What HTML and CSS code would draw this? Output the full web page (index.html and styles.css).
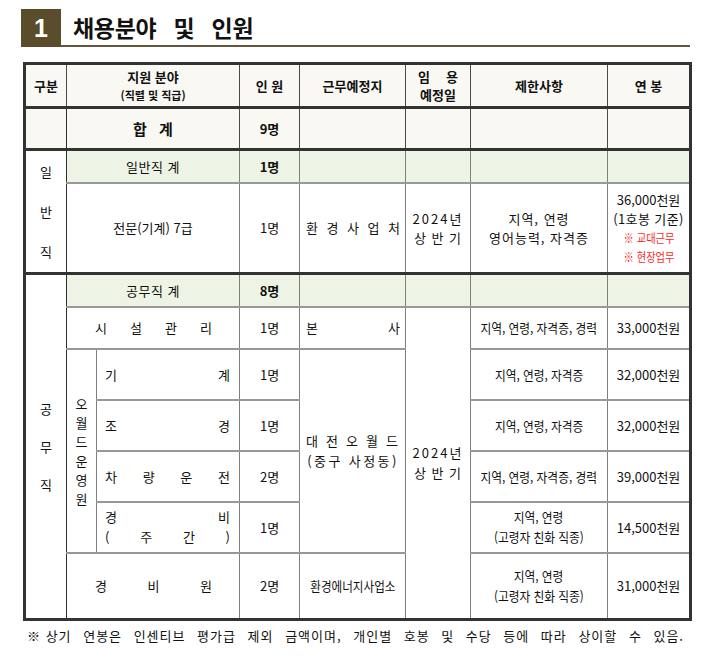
FILE: index.html
```html
<!DOCTYPE html>
<html lang="ko">
<head>
<meta charset="utf-8">
<title>채용분야 및 인원</title>
<link rel="stylesheet" href="styles.css">
</head>
<body>
<div class="page">
  <div class="title-bar">
    <div class="num">1</div>
    <div class="title-text">채용분야 및 인원</div>
  </div>

  <table class="recruit">
    <colgroup>
      <col class="w1"><col class="w2"><col class="w3"><col class="w4">
      <col class="w5"><col class="w6"><col class="w7"><col class="w8">
    </colgroup>
    <tr class="r-head">
      <th class="c1">구분</th>
      <th colspan="2"><div>지원 분야</div><div class="sub">(직렬 및 직급)</div></th>
      <th>인 원</th>
      <th>근무예정지</th>
      <th><div class="jbox"><div class="jl">임 용</div><div>예정일</div></div></th>
      <th>제한사항</th>
      <th>연 봉</th>
    </tr>
    <tr class="r-total">
      <td class="c1"></td>
      <td colspan="2" class="total-label">합 계</td>
      <td class="b">9명</td>
      <td></td><td></td><td></td><td></td>
    </tr>
    <tr class="r-sum">
      <td class="c1 white thick-b" rowspan="2"><div class="vt vt-a"><div>일</div><div>반</div><div>직</div></div></td>
      <td colspan="2" class="g sum-label">일반직 계</td>
      <td class="g b">1명</td>
      <td class="g"></td><td class="g"></td><td class="g"></td><td class="g"></td>
    </tr>
    <tr class="r-jm thick-row">
      <td colspan="2">전문(기계) 7급</td>
      <td>1명</td>
      <td><div class="jl pad-c">환 경 사 업 처</div></td>
      <td><div class="sp2">2024년</div><div class="sp1">상 반 기</div></td>
      <td class="wide"><div>지역, 연령</div><div>영어능력, 자격증</div></td>
      <td><div class="sal">36,000천원</div><div class="sal2">(1호봉 기준)</div><div class="red"><span class="sq">※ 교대근무</span></div><div class="red"><span class="sq">※ 현장업무</span></div></td>
    </tr>
    <tr class="r-sum">
      <td class="c1 white" rowspan="7"><div class="vt vt-b"><div>공</div><div>무</div><div>직</div></div></td>
      <td colspan="2" class="g sum-label">공무직 계</td>
      <td class="g b">8명</td>
      <td class="g"></td><td class="g"></td><td class="g"></td><td class="g"></td>
    </tr>
    <tr class="r-42">
      <td colspan="2"><div class="jl pad-a">시 설 관 리</div></td>
      <td>1명</td>
      <td><div class="jl pad-c">본 사</div></td>
      <td rowspan="6"><div class="lh20"><div class="sp2">2024년</div><div class="sp1">상 반 기</div></div></td>
      <td><span class="sq cond">지역, 연령, 자격증, 경력</span></td>
      <td>33,000천원</td>
    </tr>
    <tr class="r-51">
      <td rowspan="4" class="c2"><div class="vt vt-c"><div>오</div><div>월</div><div>드</div><div>운</div><div>영</div><div>원</div></div></td>
      <td><div class="jl pad-b">기 계</div></td>
      <td>1명</td>
      <td rowspan="4"><div class="lh20 pad-c"><div class="jl sp2">대 전 오 월 드</div><div class="sp25">(중구 사정동)</div></div></td>
      <td><span class="sq cond">지역, 연령, 자격증</span></td>
      <td>32,000천원</td>
    </tr>
    <tr class="r-51">
      <td><div class="jl pad-b">조 경</div></td>
      <td>1명</td>
      <td><span class="sq cond">지역, 연령, 자격증</span></td>
      <td>32,000천원</td>
    </tr>
    <tr class="r-51">
      <td><div class="jl pad-b">차 량 운 전</div></td>
      <td>2명</td>
      <td><span class="sq cond">지역, 연령, 자격증, 경력</span></td>
      <td>39,000천원</td>
    </tr>
    <tr class="r-51">
      <td><div class="lh20"><div class="jl pad-b">경 비</div><div class="jl pad-b">( 주 간 )</div></div></td>
      <td>1명</td>
      <td><div class="lh20"><div><span class="sq cond">지역, 연령</span></div><div><span class="sq cond">(고령자 친화 직종)</span></div></div></td>
      <td>14,500천원</td>
    </tr>
    <tr class="r-last">
      <td colspan="2"><div class="jl pad-a">경 비 원</div></td>
      <td>2명</td>
      <td><span class="sq narrow">환경에너지사업소</span></td>
      <td><div class="lh20"><div><span class="sq cond">지역, 연령</span></div><div><span class="sq cond">(고령자 친화 직종)</span></div></div></td>
      <td>31,000천원</td>
    </tr>
  </table>

  <p class="note"><span class="nb">※ 상기</span> 연봉은 인센티브 평가급 제외 금액이며, 개인별 호봉 및 수당 등에 따라 상이할 수 있음.</p>
</div>
</body>
</html>
```

FILE: styles.css
```css
* { box-sizing: border-box; }

body {
  margin: 0;
  background: #ffffff;
  color: #111111;
  font-family: "Noto Sans CJK KR", "Noto Sans", sans-serif;
}

.page {
  padding-top: 9px;
}

.title-bar {
  display: flex;
  margin-left: 21px;
  width: 669px;
  height: 38px;
}

.num {
  width: 40px;
  height: 38px;
  background: #5a4d2b;
  color: #ffffff;
  font-family: "Liberation Sans", Arial, sans-serif;
  font-weight: 700;
  font-size: 25px;
  display: flex;
  align-items: center;
  justify-content: center;
}

.title-text {
  flex: 1;
  height: 38px;
  border-bottom: 2px solid #62573a;
  padding-left: 12px;
  font-size: 23px;
  font-weight: 700;
  line-height: 36px;
  letter-spacing: -0.3px;
  word-spacing: 11px;
  color: #111111;
}

.recruit {
  margin-top: 15px;
  margin-left: 23px;
  border-collapse: collapse;
  table-layout: fixed;
  width: 666px;
  border: 3px solid #333333;
}

.w1 { width: 42px; }
.w2 { width: 30px; }
.w3 { width: 143px; }
.w4 { width: 60px; }
.w5 { width: 106px; }
.w6 { width: 65px; }
.w7 { width: 137px; }
.w8 { width: 83px; }

.recruit th,
.recruit td {
  padding: 0;
  text-align: center;
  vertical-align: middle;
  font-size: 13px;
  line-height: 19px;
  border-left: 1px solid #7f7f7f;
  border-right: 1px solid #7f7f7f;
  border-top: 2px solid #989898;
  border-bottom: 2px solid #989898;
}

.recruit th {
  font-weight: 700;
  background: #f9f8f3;
  border-left-color: #4a4a4a;
  border-right-color: #4a4a4a;
  line-height: 19px;
}

.recruit th .sub {
  font-size: 11px;
  line-height: 18px;
}

.r-head { height: 44px; }
.r-head th { border-bottom: 3px solid #333333; }

.r-total { height: 42px; }
.r-total td {
  background: #f9f8f3;
  border-bottom: 3px solid #333333;
  border-left-color: #4a4a4a;
  border-right-color: #4a4a4a;
}

.recruit td.total-label {
  font-weight: 700;
  font-size: 15px;
  word-spacing: 8px;
}

.r-sum { height: 33px; }
.r-jm { height: 91px; }
.r-42 { height: 42px; }
.r-51 { height: 51px; }
.r-last { height: 67px; }

.thick-row td,
.recruit td.thick-b {
  border-bottom: 3px solid #333333;
}

.recruit td.c1 {
  border-right: 1px solid #2e2e2e;
}

.white { background: #ffffff; }

.recruit td.g { background: #eef4e5; }

.b { font-weight: 700; }

.sum-label { letter-spacing: 0.5px; }

.vt {
  display: flex;
  flex-direction: column;
  align-items: center;
}
.vt-a { line-height: 40px; }
.vt-b { line-height: 38px; }
.vt-c { line-height: 19px; }

.jl {
  text-align: justify;
  text-align-last: justify;
}

.pad-a { padding: 0 27px 0 28px; }
.pad-b { padding: 0 9px 0 8px; }
.pad-c { padding: 0 5px 0 6px; }

.jbox {
  display: inline-block;
  width: 40px;
  line-height: 18px;
}

.sp1 { letter-spacing: 1px; }
.sp2 { letter-spacing: 2px; }
.sp25 { letter-spacing: 2.4px; }

.lh20 { line-height: 20px; }

.wide { letter-spacing: 1px; }

.sal2 { letter-spacing: 0.4px; }

.sq {
  display: inline-block;
  white-space: nowrap;
}

.red {
  color: #ff1f1f;
  font-size: 12.5px;
}
.red .sq {
  transform: scaleX(0.82);
}

.cond {
  font-size: 13px;
  transform: scaleX(0.9);
}

.narrow {
  font-size: 13px;
  transform: scaleX(0.89);
}

.note {
  margin: 6px 0 0 27px;
  width: 657px;
  font-size: 13px;
  line-height: 18px;
  letter-spacing: 1px;
  text-align: justify;
  text-align-last: justify;
  color: #111111;
}

.nb {
  display: inline-block;
  white-space: nowrap;
}
```
